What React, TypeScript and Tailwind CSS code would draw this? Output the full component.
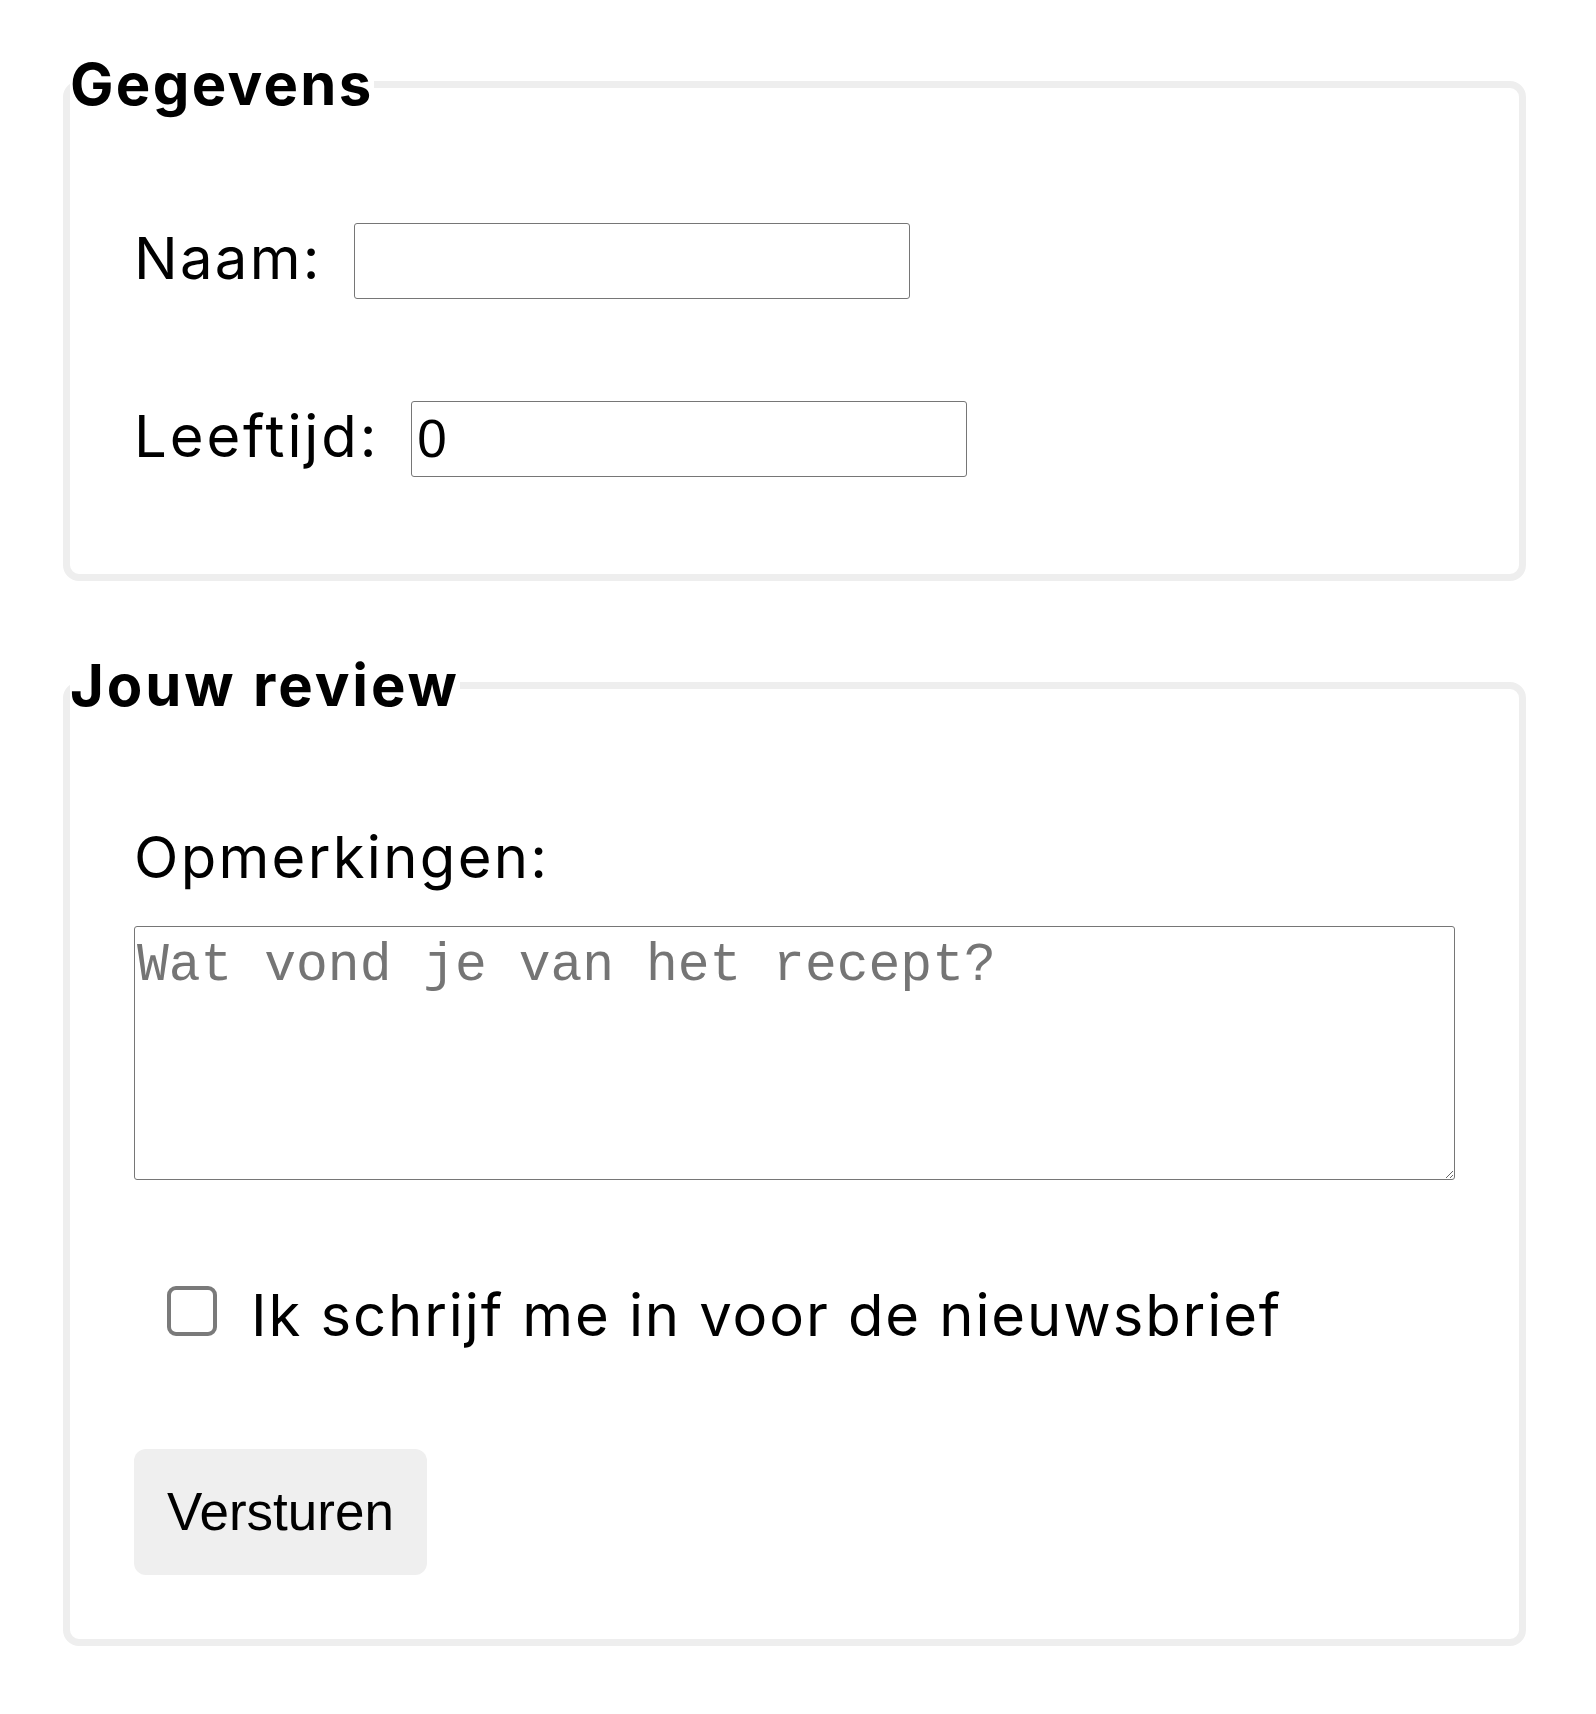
export default function App() {
  return (
    <div className="min-h-screen bg-white pt-[49px] pl-[63px] pr-[70px] font-['Inter',sans-serif] tracking-[2.3px] text-black">
      <form>
        <fieldset className="rounded-[16px] border-[7px] border-[#eeeeee] px-[64px] pb-[97px]">
          <legend className="-ml-[64px] p-0 text-[58px] font-bold leading-[70px]">Gegevens</legend>

          <div className="mt-[104px] flex items-baseline gap-[32px]">
            <label htmlFor="naam" className="text-[58px] leading-[70px]">
              Naam:
            </label>
            <input
              id="naam"
              type="text"
              className="h-[76px] w-[556px] rounded-[3px] border border-[#767676] px-[5px] font-['Liberation_Sans',Arial,sans-serif] text-[53px] tracking-normal"
            />
          </div>

          <div className="mt-[102px] flex items-baseline gap-[32px]">
            <label htmlFor="leeftijd" className="text-[58px] leading-[70px] tracking-[2.9px]">
              Leeftijd:
            </label>
            <input
              id="leeftijd"
              type="number"
              defaultValue={0}
              className="h-[76px] w-[556px] rounded-[3px] border border-[#767676] px-[5px] font-['Liberation_Sans',Arial,sans-serif] text-[53px] tracking-normal"
            />
          </div>
        </fieldset>

        <fieldset className="mt-[69px] rounded-[16px] border-[7px] border-[#eeeeee] px-[64px] pb-[64px]">
          <legend className="-ml-[64px] p-0 text-[58px] font-bold leading-[70px] tracking-[2.9px]">Jouw review</legend>

          <label htmlFor="opmerkingen" className="mt-[102px] block text-[58px] leading-[70px]">
            Opmerkingen:
          </label>
          <textarea
            id="opmerkingen"
            placeholder="Wat vond je van het recept?"
            className="mt-[34px] block h-[254px] w-full rounded-[3px] border border-[#767676] px-[2px] pt-0 pb-[2px] font-['Liberation_Mono','Courier_New',monospace] text-[53px] tracking-normal placeholder:text-[#757575]"
          />

          <div className="mt-[100px] flex items-start">
            <input
              id="nieuwsbrief"
              type="checkbox"
              className="ml-[33px] mt-[6px] h-[50px] w-[50px] shrink-0 appearance-none rounded-[9px] border-[4px] border-[#7a7a7a] bg-white"
            />
            <label htmlFor="nieuwsbrief" className="ml-[34px] text-[58px] leading-[70px] tracking-[1.9px]">
              Ik schrijf me in voor de nieuwsbrief
            </label>
          </div>

          <button
            type="button"
            className="mt-[99px] block rounded-[12px] bg-[#efefef] px-[33px] py-[33px] font-['Liberation_Sans',Arial,sans-serif] text-[53px] leading-[60px] tracking-normal"
          >
            Versturen
          </button>
        </fieldset>
      </form>
    </div>
  );
}
